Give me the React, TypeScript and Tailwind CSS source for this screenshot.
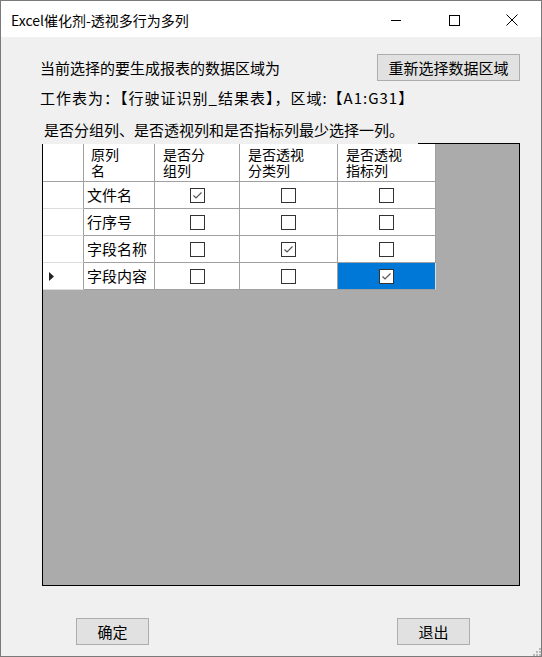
import React from "react";

const CK = "font-['Noto_Sans_CJK_SC','Noto_Sans',sans-serif]";

function Box({ checked }: { checked: boolean }) {
  return (
    <svg width="15" height="15" viewBox="0 0 15 15">
      <rect x="0.5" y="0.5" width="14" height="14" fill="white" stroke="#333333" />
      {checked && (
        <polyline points="3.5,7.5 6,10 11.5,4.5" fill="none" stroke="#555555" strokeWidth="1.2" />
      )}
    </svg>
  );
}

const rows: { name: string; v: [boolean, boolean, boolean] }[] = [
  { name: "文件名", v: [true, false, false] },
  { name: "行序号", v: [false, false, false] },
  { name: "字段名称", v: [false, true, false] },
  { name: "字段内容", v: [false, false, true] },
];

function Head({ a, b, w, pl }: { a: string; b: string; w: string; pl: string }) {
  return (
    <div className={`${w} ${pl} bg-white border-r border-b border-[#a0a0a0] pt-[2px] text-[14px] leading-[16px] flex flex-col`}>
      <span className="h-[16px]">{a}</span>
      <span className="h-[16px]">{b}</span>
    </div>
  );
}

export default function App() {
  return (
    <div className={`relative w-[542px] h-[657px] border border-[#7a7a7a] bg-[#f0f0f0] flex flex-col ${CK} text-black`}>
      {/* title bar */}
      <div className="h-[36px] bg-white flex items-center shrink-0">
        <div className="pl-[10px] text-[14px] leading-[18px] flex-1 pt-[2px]">Excel催化剂-透视多行为多列</div>
        <div className="w-[58px] h-full flex items-center justify-center">
          <div className="w-[10px] h-px bg-black mt-[2px]" />
        </div>
        <div className="w-[58px] h-full flex items-center justify-center">
          <div className="w-[11px] h-[11px] border border-black mt-[2px]" />
        </div>
        <div className="w-[58px] h-full flex items-center justify-center">
          <svg width="12" height="12" viewBox="0 0 12 12" className="mt-[2px]">
            <path d="M0.5 0.5 L11.5 11.5 M11.5 0.5 L0.5 11.5" stroke="black" strokeWidth="1" />
          </svg>
        </div>
      </div>

      {/* body */}
      <div className="flex flex-col pl-[39px] pr-[21px] text-[15px]">
        <div className="mt-[17px] h-[27px] flex items-center justify-between">
          <span className="leading-[18px]">当前选择的要生成报表的数据区域为</span>
          <button className="w-[143px] h-[27px] bg-[#e1e1e1] border border-[#adadad] text-[15px] leading-[18px] flex items-center justify-center">
            重新选择数据区域
          </button>
        </div>
        <div className="mt-[8px] leading-[18px] h-[18px] tracking-[1px]">工作表为：【行驶证识别_结果表】，区域:【A1:G31】</div>
        <div className="mt-[14px] leading-[18px] h-[18px] pl-[4px]">是否分组列、是否透视列和是否指标列最少选择一列。</div>

        {/* grid */}
        <div className="mt-[4px] ml-[2px] w-[478px] flex flex-col">
          <div className="h-px flex">
            <div className="w-[376px]" />
            <div className="flex-1 bg-black" />
          </div>
          <div className="h-[442px] border-l border-r border-b border-black bg-[#ababab] flex flex-col">
            {/* header */}
            <div className="flex h-[38px]">
              <div className="w-[41px] bg-white border-r border-b border-[#a0a0a0]" />
              <Head a="原列" b="名" w="w-[71px]" pl="pl-[7px]" />
              <Head a="是否分" b="组列" w="w-[85px]" pl="pl-[8px]" />
              <Head a="是否透视" b="分类列" w="w-[98px]" pl="pl-[8px]" />
              <Head a="是否透视" b="指标列" w="w-[98px]" pl="pl-[8px]" />
            </div>
            {rows.map((r, i) => (
              <div key={r.name} className="flex h-[27px]">
                <div className="w-[41px] bg-white border-r border-[#a0a0a0] border-b-[#dcdcdc] border-b flex items-center pl-[6px]">
                  {i === 3 && (
                    <svg width="5" height="9" viewBox="0 0 5 9">
                      <polygon points="0,0 5,4.5 0,9" fill="#222222" />
                    </svg>
                  )}
                </div>
                <div className="w-[71px] bg-white border-r border-b border-[#a0a0a0] flex items-center pl-[3px] leading-[18px]">
                  {r.name}
                </div>
                {r.v.map((c, j) => {
                  const sel = i === 3 && j === 2;
                  const w = j === 0 ? "w-[85px]" : "w-[98px]";
                  return (
                    <div
                      key={j}
                      className={`${w} ${sel ? "bg-[#0078d7] border-r-[#dcdcdc]" : "bg-white border-r-[#a0a0a0]"} border-r border-b border-b-[#a0a0a0] flex items-center justify-center`}
                    >
                      <Box checked={c} />
                    </div>
                  );
                })}
              </div>
            ))}
          </div>
        </div>

        {/* bottom buttons */}
        <div className="mt-[32px] flex">
          <button className="ml-[36px] w-[73px] h-[27px] bg-[#e1e1e1] border border-[#adadad] text-[15px] leading-[18px] flex items-center justify-center">
            确定
          </button>
          <button className="ml-[248px] w-[73px] h-[27px] bg-[#e1e1e1] border border-[#adadad] text-[15px] leading-[18px] flex items-center justify-center">
            退出
          </button>
        </div>
      </div>

      {/* resize grip */}
      <svg className="absolute right-0 bottom-0" width="8" height="8" viewBox="0 0 8 8">
        <rect x="6" y="0" width="2" height="2" fill="#b8b8b8" />
        <rect x="3" y="3" width="2" height="2" fill="#b8b8b8" />
        <rect x="6" y="3" width="2" height="2" fill="#b8b8b8" />
        <rect x="0" y="6" width="2" height="2" fill="#b8b8b8" />
        <rect x="3" y="6" width="2" height="2" fill="#b8b8b8" />
        <rect x="6" y="6" width="2" height="2" fill="#b8b8b8" />
      </svg>
    </div>
  );
}
